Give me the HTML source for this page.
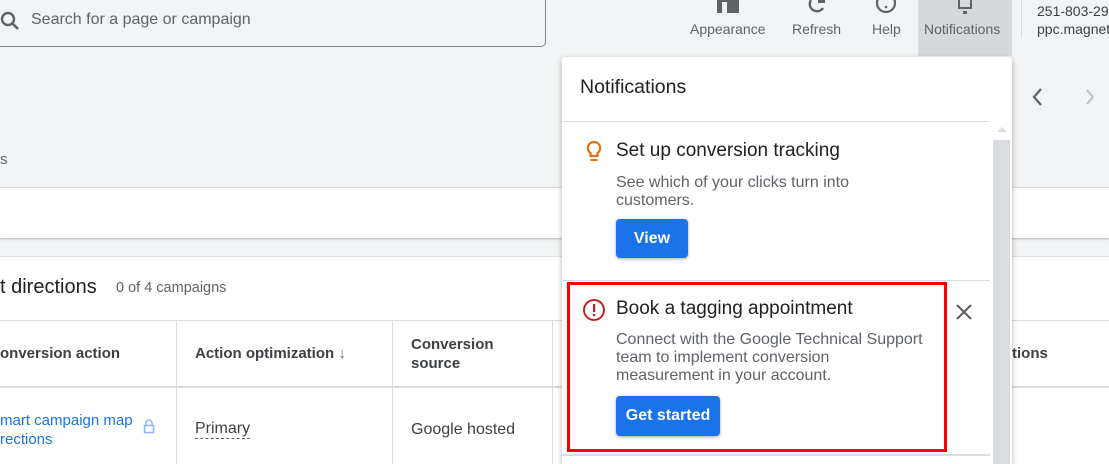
<!DOCTYPE html>
<html><head><style>
*{margin:0;padding:0;box-sizing:border-box}
html,body{width:1109px;height:464px;overflow:hidden}
body{background:#f1f3f4;font-family:"Liberation Sans",Roboto,sans-serif;position:relative;color:#202124}
.a{position:absolute;white-space:nowrap}
.lbl{font-size:14px;color:#5f6368;top:21px}
.btn{position:absolute;background:#1a73e8;color:#fff;font-weight:bold;font-size:16px;border-radius:4px;box-shadow:0 1px 3px rgba(0,0,0,.35);text-align:center}
.desc{font-size:16px;color:#5f6368;line-height:18px}
.th{font-weight:bold;font-size:15px;color:#3c4043}
</style></head><body>
<div class="a" style="left:-10px;top:-10px;width:556px;height:57px;border:1px solid #80868b;border-radius:0 0 5px 0"></div>
<svg class="a" style="left:0;top:10px" width="22" height="22" viewBox="0 0 22 22"><circle cx="8" cy="9" r="6" fill="none" stroke="#5f6368" stroke-width="2.4"/><path d="M12 13l6 6" stroke="#5f6368" stroke-width="2.6"/></svg>
<div class="a" style="left:31px;top:11px;font-size:16px;color:#5f6368">Search for a page or campaign</div>
<div class="a" style="left:0;top:151px;font-size:15px;color:#5f6368">s</div>
<div class="a" style="left:918px;top:0;width:94px;height:56px;background:#d6d8da"></div>
<div class="a" style="left:717px;top:0;width:22px;height:13px;background:#5f6368"></div>
<div class="a" style="left:722px;top:2px;width:5px;height:11px;background:#f1f3f4"></div>
<svg class="a" style="left:805px;top:0" width="24" height="16"><path d="M6 0a7 7 0 0 0 12 8" fill="none" stroke="#5f6368" stroke-width="2.4"/><rect x="13" y="0" width="7" height="3" fill="#5f6368"/></svg>
<svg class="a" style="left:874px;top:0" width="24" height="16"><circle cx="12" cy="3" r="9" fill="none" stroke="#5f6368" stroke-width="2.2"/><circle cx="12" cy="7" r="1.3" fill="#5f6368"/></svg>
<svg class="a" style="left:955px;top:0" width="20" height="16"><path d="M4 0v8h12V0" fill="none" stroke="#5f6368" stroke-width="2"/><rect x="8" y="11" width="4" height="3" fill="#5f6368"/></svg>
<div class="a lbl" style="left:690px">Appearance</div>
<div class="a lbl" style="left:792px">Refresh</div>
<div class="a lbl" style="left:872px">Help</div>
<div class="a lbl" style="left:924px">Notifications</div>
<div class="a" style="left:1021px;top:0;width:1px;height:38px;background:#dadce0"></div>
<div class="a" style="left:1037px;top:3px;font-size:14px;color:#3c4043">251-803-29</div>
<div class="a" style="left:1037px;top:21px;font-size:14px;color:#3c4043">ppc.magnet</div>
<svg class="a" style="left:1028px;top:87px" width="80" height="20"><path d="M13 2l-7 8 7 8" fill="none" stroke="#5f6368" stroke-width="2.2"/><path d="M59 3l6 7-6 7" fill="none" stroke="#bdc1c6" stroke-width="2"/></svg>
<div class="a" style="left:0;top:187px;width:1109px;height:51px;background:#fff;border-top:1px solid #dadce0;box-shadow:0 1px 2px rgba(0,0,0,.25)"></div>
<div class="a" style="left:0;top:256px;width:1109px;height:208px;background:#fff;border-top:1px solid #e0e0e0"></div>
<div class="a" style="left:0;top:276px;font-size:20px;color:#202124">t directions</div>
<div class="a" style="left:116px;top:280px;font-size:14.5px;color:#5f6368">0 of 4 campaigns</div>
<div class="a" style="left:0;top:320px;width:1109px;height:1px;background:#dadce0"></div>
<div class="a" style="left:0;top:386px;width:1109px;height:2px;background:#dadce0"></div>
<div class="a" style="left:176px;top:320px;width:1px;height:144px;background:#dadce0"></div>
<div class="a" style="left:392px;top:320px;width:1px;height:144px;background:#dadce0"></div>
<div class="a" style="left:552px;top:320px;width:1px;height:144px;background:#dadce0"></div>
<div class="a th" style="left:0;top:345px">onversion action</div>
<div class="a th" style="left:195px;top:345px">Action optimization <span style="font-weight:normal;color:#5f6368">↓</span></div>
<div class="a th" style="left:411px;top:335px;line-height:19px">Conversion<br>source</div>
<div class="a th" style="left:1012px;top:345px">tions</div>
<div class="a" style="left:0;top:411px;font-size:15px;color:#1a73e8;line-height:19px">mart campaign map<br>rections</div>
<svg class="a" style="left:143px;top:419px" width="12" height="15"><path d="M3 6V4a3 3 0 0 1 6 0v2" fill="none" stroke="#8ab4f8" stroke-width="1.5"/><rect x="1.5" y="6.5" width="9" height="7" fill="none" stroke="#8ab4f8" stroke-width="1.5"/></svg>
<div class="a" style="left:195px;top:420px;font-size:16px;color:#3c4043;border-bottom:1px dashed #5f6368;line-height:18px">Primary</div>
<div class="a" style="left:411px;top:421px;font-size:16px;color:#3c4043">Google hosted</div>
<div class="a" style="left:562px;top:57px;width:450px;height:407px;background:#fff;border-radius:4px 4px 0 0;box-shadow:0 2px 6px rgba(0,0,0,.3)"></div>
<div class="a" style="left:580px;top:76px;font-size:19.5px;color:#202124">Notifications</div>
<div class="a" style="left:562px;top:121px;width:428px;height:1px;background:#dadce0"></div>
<div class="a" style="left:993px;top:140px;width:17px;height:324px;background:#dadce0"></div>
<div class="a" style="left:997px;top:127px;width:0;height:0;border-left:5px solid transparent;border-right:5px solid transparent;border-bottom:5px solid #dadce0"></div>
<svg class="a" style="left:584px;top:140px" width="20" height="24"><path d="M10 2a6 6 0 0 0-3.5 11v3h7v-3A6 6 0 0 0 10 2z" fill="none" stroke="#e8710a" stroke-width="2.2"/><rect x="6.5" y="19" width="7" height="2" fill="#e8710a"/></svg>
<div class="a" style="left:616px;top:140px;font-size:19px;color:#202124">Set up conversion tracking</div>
<div class="a desc" style="left:616px;top:174px">See which of your clicks turn into<br>customers.</div>
<div class="btn" style="left:616px;top:219px;width:72px;height:39px;line-height:39px">View</div>
<div class="a" style="left:562px;top:280px;width:428px;height:1px;background:#dadce0"></div>
<div class="a" style="left:567px;top:282px;width:380px;height:170px;border:3px solid #f00"></div>
<svg class="a" style="left:582px;top:298px" width="24" height="24"><circle cx="12" cy="12" r="10" fill="none" stroke="#c5221f" stroke-width="2"/><rect x="11" y="6" width="2.2" height="8" fill="#c5221f"/><rect x="11" y="16" width="2.2" height="2.2" fill="#c5221f"/></svg>
<div class="a" style="left:616px;top:298px;font-size:19px;color:#202124">Book a tagging appointment</div>
<svg class="a" style="left:955px;top:303px" width="18" height="18"><path d="M2 2l14 14M16 2L2 16" stroke="#5f6368" stroke-width="2.2"/></svg>
<div class="a desc" style="left:616px;top:331px">Connect with the Google Technical Support<br>team to implement conversion<br>measurement in your account.</div>
<div class="btn" style="left:616px;top:396px;width:104px;height:40px;line-height:40px">Get started</div>
<div class="a" style="left:562px;top:454px;width:428px;height:2px;background:#dadce0"></div>
</body></html>
